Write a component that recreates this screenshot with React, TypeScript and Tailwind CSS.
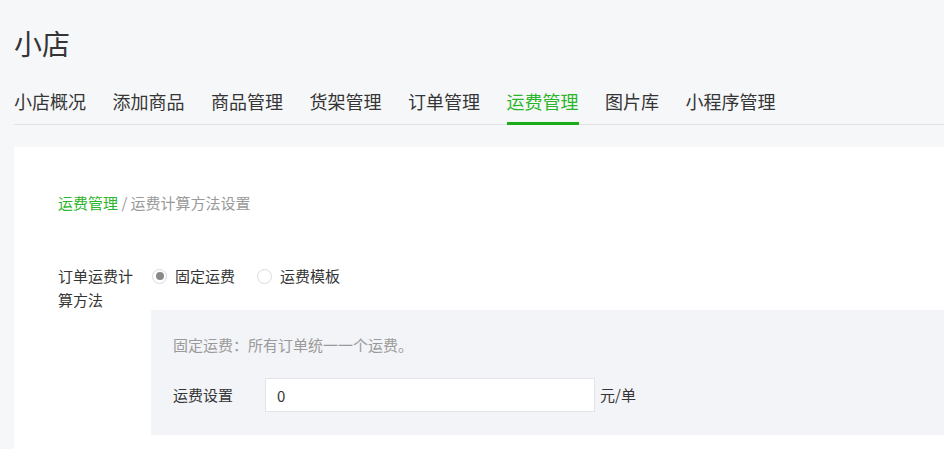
import { useState } from "react";

const tabs = ["小店概况", "添加商品", "商品管理", "货架管理", "订单管理", "运费管理", "图片库", "小程序管理"];

function Radio({ checked, label, onClick }: { checked: boolean; label: string; onClick: () => void }) {
  return (
    <label onClick={onClick} className="flex items-center gap-[8px] cursor-pointer">
      <span className="w-[15px] h-[15px] rounded-full border border-[#d9dadc] bg-white flex items-center justify-center">
        {checked && <span className="w-[8px] h-[8px] rounded-full bg-[#8a8a8a]" />}
      </span>
      <span className="text-[15px] leading-[24px] text-[#353535]">{label}</span>
    </label>
  );
}

export default function App() {
  const [mode, setMode] = useState<"fixed" | "template">("fixed");
  const [fee, setFee] = useState("0");

  return (
    <div
      className="min-h-screen w-full overflow-hidden bg-[#f6f7f9] pl-[14px] text-[#353535]"
      style={{ fontFamily: '"Noto Sans CJK SC", "Noto Sans", sans-serif' }}
    >
      {/* Header */}
      <h1 className="pt-[23px] text-[28px] leading-[40px] font-normal">小店</h1>

      {/* Tabs */}
      <nav className="mt-[26px] flex gap-[26.5px] border-b border-[#e1e2e4]">
        {tabs.map((t) => (
          <button
            key={t}
            className={`-mb-px pb-[9px] text-[18px] leading-[24px] border-b-[3px] ${
              t === "运费管理" ? "border-[#1aad19] text-[#2bb52b]" : "border-transparent text-[#353535]"
            }`}
          >
            {t}
          </button>
        ))}
      </nav>

      {/* Card */}
      <div className="mt-[22px] bg-white pl-[44px] pt-[46px] min-h-[320px]">
        <div className="text-[15px] leading-[20px]">
          <span className="text-[#2bb52b]">运费管理</span>
          <span className="text-[#9a9a9a]"> / 运费计算方法设置</span>
        </div>

        <div className="mt-[51px] flex">
          <div className="w-[93px] shrink-0 pr-[13px] text-[15px] leading-[24px]">订单运费计算方法</div>
          <div className="flex-1">
            <div className="flex gap-[22px] pl-px">
              <Radio checked={mode === "fixed"} label="固定运费" onClick={() => setMode("fixed")} />
              <Radio checked={mode === "template"} label="运费模板" onClick={() => setMode("template")} />
            </div>

            <div className="mt-[22px] bg-[#f3f4f7] pl-[22px] pt-[25px] pb-[23px]">
              <p className="text-[15px] leading-[20px] text-[#9a9a9a]">固定运费：所有订单统一一个运费。</p>
              <div className="mt-[23px] flex items-center">
                <span className="w-[92px] text-[15px]">运费设置</span>
                <input
                  value={fee}
                  onChange={(e) => setFee(e.target.value)}
                  className="w-[330px] h-[34px] border border-[#e2e4e8] bg-white px-[11px] text-[15px] text-[#353535] outline-none"
                />
                <span className="ml-[5px] text-[15px]">元/单</span>
              </div>
            </div>
          </div>
        </div>
      </div>
    </div>
  );
}
